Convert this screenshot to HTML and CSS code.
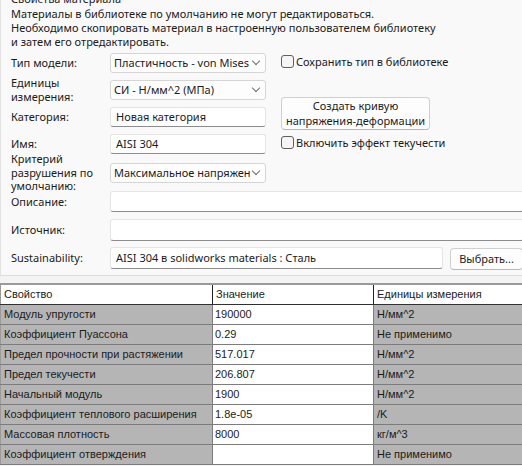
FILE: index.html
```html
<!DOCTYPE html>
<html lang="ru">
<head>
    <meta charset="UTF-8">
    <title>Свойства материала</title>
    <link rel="stylesheet" href="styles.css">
</head>
<body>
    <div class="group">
        <div class="group-title">Свойства материала</div>
        <p class="note">Материалы в библиотеке по умолчанию не могут редактироваться.<br>
        Необходимо скопировать материал в настроенную пользователем библиотеку<br>
        и затем его отредактировать.</p>

        <div class="form-grid">
            <div class="label r1">Тип модели:</div>
            <div class="select r1">Пластичность - von Mises<span class="chev"></span></div>
            <label class="check r1"><span class="box"></span>Сохранить тип в библиотеке</label>

            <div class="label r2">Единицы<br>измерения:</div>
            <div class="select r2">СИ - Н/мм^2 (МПа)<span class="chev"></span></div>
            <div class="btn curve-btn">Создать кривую<br>напряжения-деформации</div>

            <div class="label r3">Категория:</div>
            <div class="input r3">Новая категория</div>

            <div class="label r4">Имя:</div>
            <div class="input r4">AISI 304</div>
            <label class="check r4"><span class="box"></span>Включить эффект текучести</label>

            <div class="label r5">Критерий<br>разрушения по<br>умолчанию:</div>
            <div class="select r5">Максимальное напряжен<span class="chev"></span></div>

            <div class="label r6">Описание:</div>
            <div class="input wide r6"></div>

            <div class="label r7">Источник:</div>
            <div class="input wide tall r7"></div>

            <div class="label r8">Sustainability:</div>
            <div class="sus-row r8">
                <div class="input tall sus-input">AISI 304 в solidworks materials : Сталь</div>
                <div class="btn pick-btn">Выбрать...</div>
            </div>
        </div>
    </div>

    <table class="props">
        <thead>
            <tr><th>Свойство</th><th>Значение</th><th>Единицы измерения</th></tr>
        </thead>
        <tbody>
            <tr><td>Модуль упругости</td><td class="val">190000</td><td>Н/мм^2</td></tr>
            <tr><td>Коэффициент Пуассона</td><td class="val">0.29</td><td>Не применимо</td></tr>
            <tr><td>Предел прочности при растяжении</td><td class="val">517.017</td><td>Н/мм^2</td></tr>
            <tr><td>Предел текучести</td><td class="val">206.807</td><td>Н/мм^2</td></tr>
            <tr><td>Начальный модуль</td><td class="val">1900</td><td>Н/мм^2</td></tr>
            <tr><td>Коэффициент теплового расширения</td><td class="val">1.8e-05</td><td>/K</td></tr>
            <tr><td>Массовая плотность</td><td class="val">8000</td><td>кг/м^3</td></tr>
            <tr><td>Коэффициент отверждения</td><td class="val"></td><td>Не применимо</td></tr>
        </tbody>
    </table>
</body>
</html>
```

FILE: styles.css
```css
* {
    margin: 0;
    padding: 0;
    box-sizing: border-box;
}
body {
    font-family: 'Noto Sans', 'Open Sans', sans-serif;
    font-size: 11px;
    color: #1b1b1b;
    background-color: #f3f3f3;
    width: 522px;
    overflow: hidden;
}
.group {
    display: flow-root;
    background-color: #f9f9f9;
    border-left: 1px solid #e2e2e2;
    border-bottom: 1px solid #dcdcdc;
    padding: 0 0 3px 10px;
    height: 276px;
}
.group-title {
    margin-top: -9px;
    line-height: 15px;
    height: 15px;
}
.note {
    line-height: 14px;
    margin-top: 1px;
}
.form-grid {
    display: grid;
    grid-template-columns: 99px 156px 1fr;
    grid-template-rows: 27px 27px 27px 28px 29px 29px 28px 28px;
}
.label {
    grid-column: 1;
    align-self: center;
    line-height: 13.5px;
}
.r1 { grid-row: 1; }
.r2 { grid-row: 2; }
.r3 { grid-row: 3; }
.r4 { grid-row: 4; }
.r5 { grid-row: 5; }
.r6 { grid-row: 6; }
.r7 { grid-row: 7; }
.r8 { grid-row: 8; }
.select, .input {
    grid-column: 2;
    align-self: center;
    height: 20px;
    line-height: 18px;
    background-color: #ffffff;
    border: 1px solid #e5e5e5;
    border-radius: 3px;
    padding-left: 5px;
    white-space: nowrap;
    overflow: hidden;
    position: relative;
}
.select {
    border-color: #d5d5d5;
    background-color: #fdfdfd;
    padding-left: 3px;
    padding-right: 18px;
}
.input {
    border-bottom-color: #8c8c8c;
    padding-left: 5px;
}
.input.wide {
    grid-column: 2 / 4;
    height: 21px;
    margin-right: -2px;
}
.input.tall {
    height: 22px;
    line-height: 20px;
}
.chev {
    position: absolute;
    right: 6px;
    top: 4px;
    width: 6px;
    height: 6px;
    border-right: 1px solid #707070;
    border-bottom: 1px solid #707070;
    transform: rotate(45deg);
}
.check {
    grid-column: 3;
    align-self: center;
    display: flex;
    align-items: center;
    gap: 2px;
    margin-left: 15px;
    margin-top: -3px;
}
.box {
    width: 13px;
    height: 13px;
    border: 1px solid #5f5f5f;
    border-radius: 3px;
    background-color: #f5f5f5;
}
.btn {
    background-color: #fdfdfd;
    border: 1px solid #d0d0d0;
    border-bottom-color: #b8b8b8;
    border-radius: 4px;
    text-align: center;
}
.curve-btn {
    grid-column: 3;
    grid-row: 2 / 4;
    align-self: end;
    justify-self: start;
    margin-left: 15px;
    width: 149px;
    height: 33px;
    line-height: 14.5px;
    padding-top: 1px;
}
.sus-row {
    grid-column: 2 / 4;
    align-self: center;
    display: flex;
    gap: 7px;
    margin-right: -1px;
}
.sus-input {
    flex: 1;
}
.pick-btn {
    width: 73px;
    height: 22px;
    line-height: 20px;
    margin-top: 1px;
}
.props {
    margin-top: 7px;
    border-collapse: collapse;
    width: 524px;
    table-layout: fixed;
    border-top: 2px solid #9a9a9a;
    border-left: 1px solid #9a9a9a;
    font-family: 'Liberation Sans', Arial, sans-serif;
    font-size: 11px;
}
.props th, .props td {
    height: 20px;
    padding: 0 3px;
    text-align: left;
    font-weight: normal;
    white-space: nowrap;
    overflow: hidden;
    line-height: 19px;
}
.props th {
    background-color: #ffffff;
    border-right: 1px solid #202020;
    border-bottom: 1px solid #303030;
}
.props th:nth-child(1), .props td:nth-child(1) { width: 212px; }
.props th:nth-child(2), .props td:nth-child(2) { width: 161px; }
.props td {
    background-color: #b5b5b5;
    border-bottom: 1px solid #7c7c7c;
    border-right: 1px solid #7c7c7c;
}
.props td.val {
    background-color: #ffffff;
    padding-left: 2px;
}
```
